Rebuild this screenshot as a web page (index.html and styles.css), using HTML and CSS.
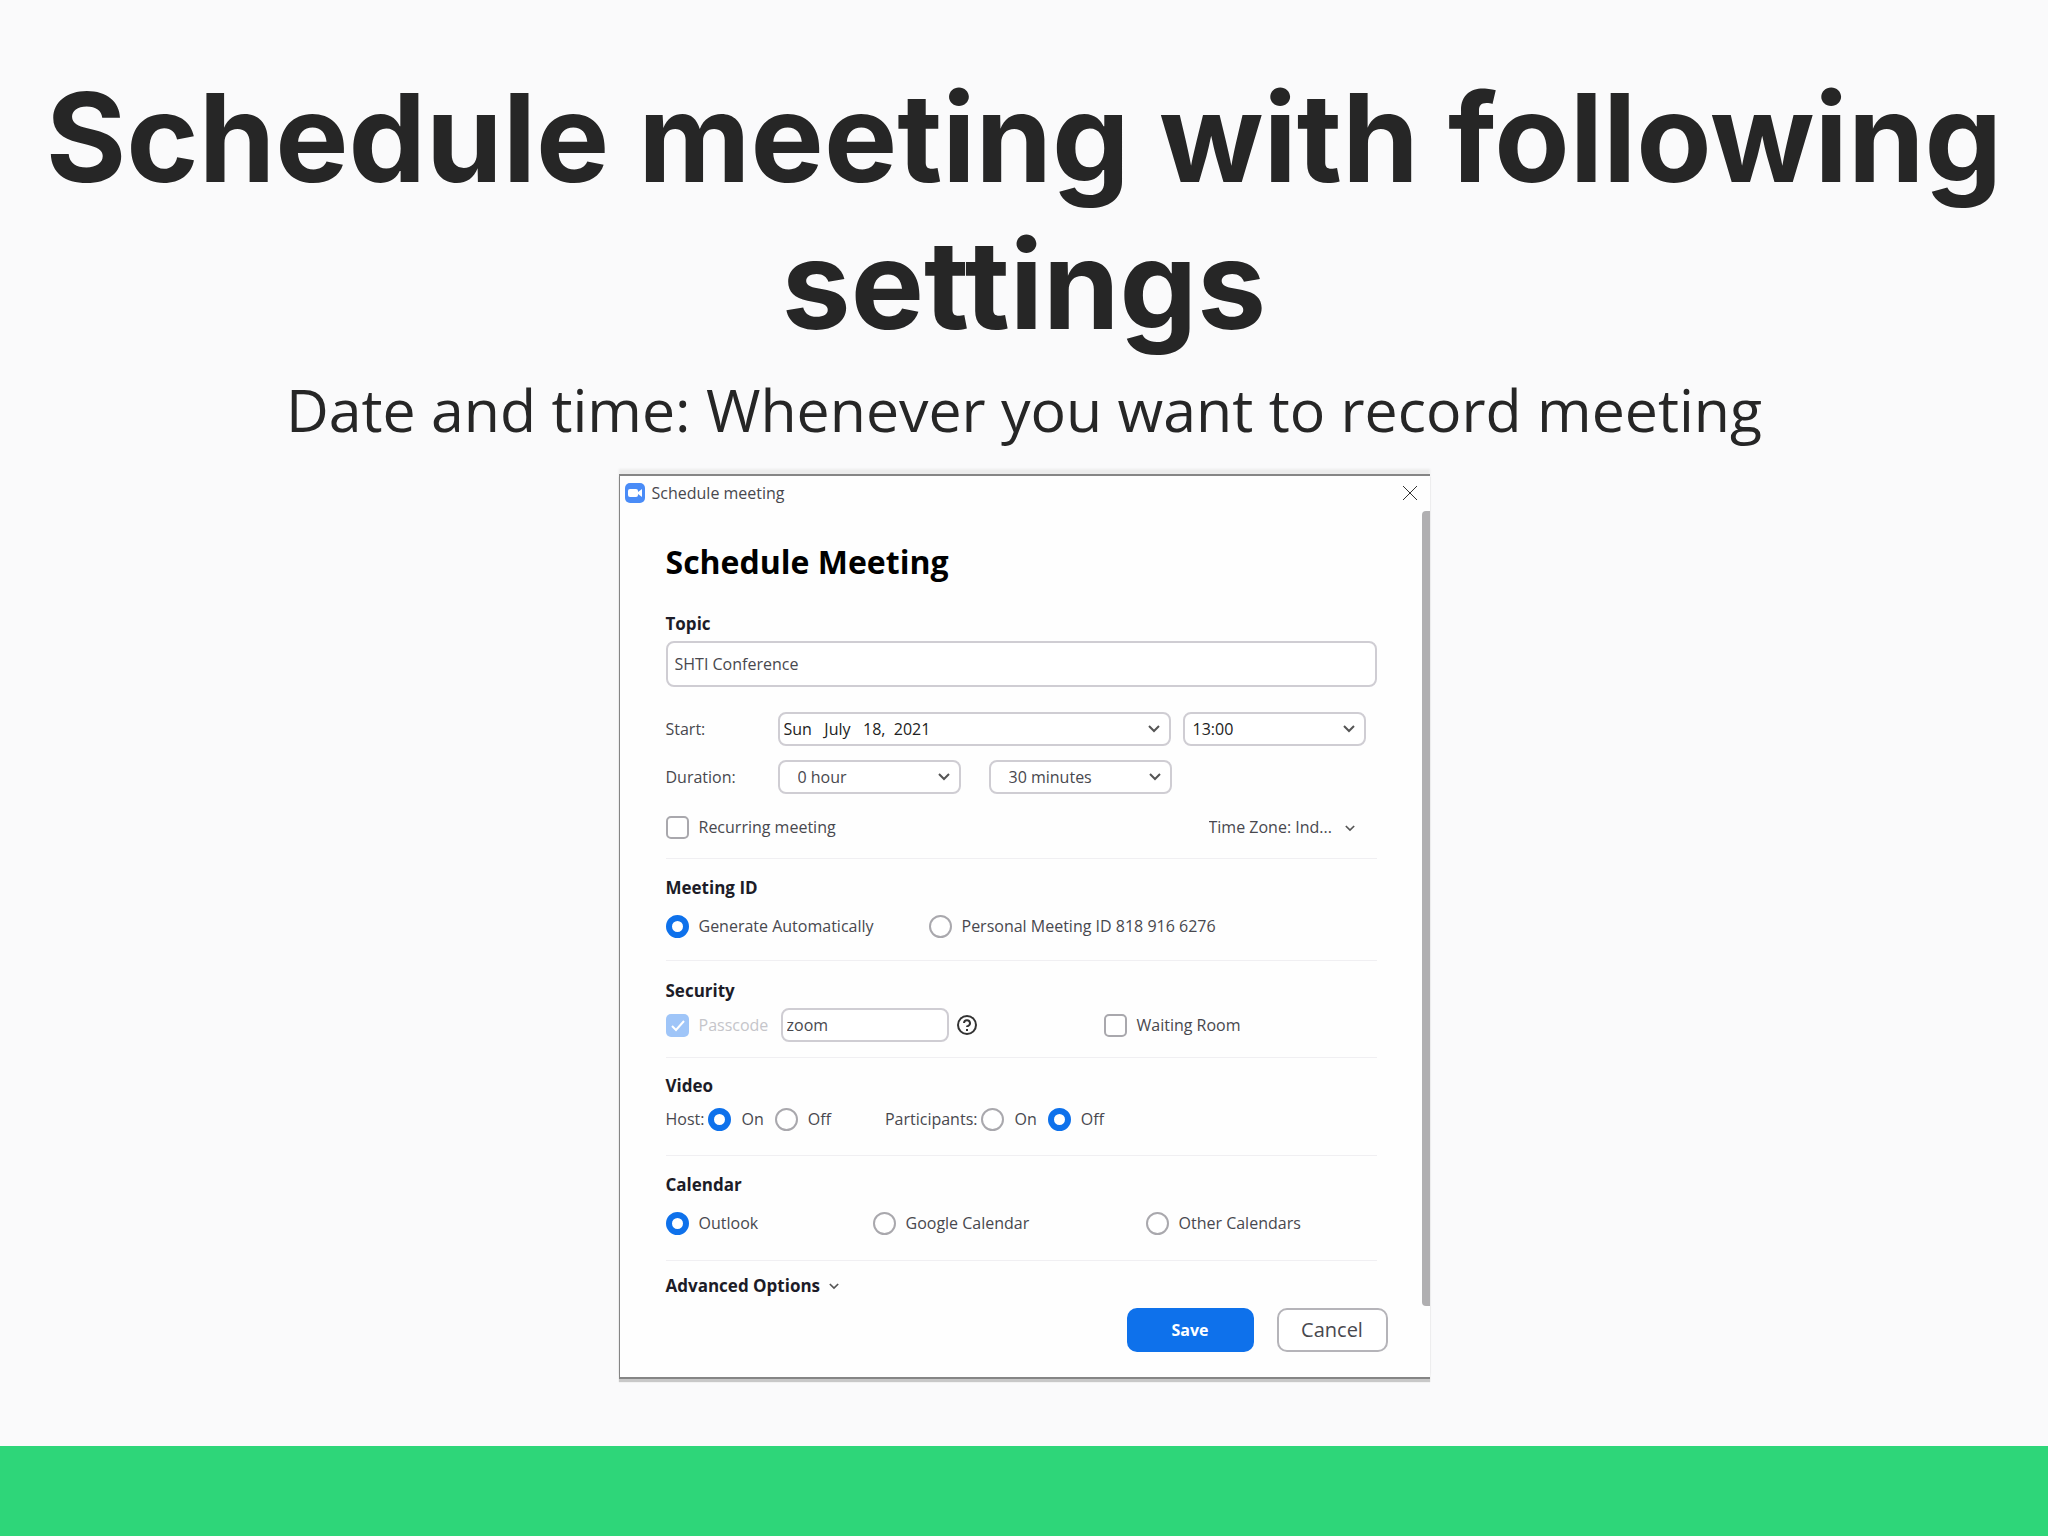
FILE: index.html
```html
<!DOCTYPE html>
<html lang="en">
<head>
    <meta charset="UTF-8">
    <meta name="viewport" content="width=device-width, initial-scale=1.0">
    <title>Schedule meeting with following settings</title>
    <link rel="stylesheet" href="styles.css">
</head>
<body>
    <header class="slide-header">
        <h1>Schedule meeting with following settings</h1>
        <p>Date and time: Whenever you want to record meeting</p>
    </header>

    <main class="dialog">
        <div class="title-bar">
            <svg class="app-icon" viewBox="0 0 20 20" aria-hidden="true">
                <rect width="20" height="20" rx="5" fill="#4a8cf7"/>
                <rect x="3" y="6" width="10" height="8" rx="2" fill="#fff"/>
                <path d="M13 9l4-3v8l-4-3z" fill="#fff"/>
            </svg>
            <span class="window-title">Schedule meeting</span>
            <button type="button" class="close" aria-label="Close">
                <svg viewBox="0 0 16 16"><path d="M1 1l14 14M15 1L1 15"/></svg>
            </button>
        </div>

        <form id="meeting-form">
            <div class="fields">
                <h2>Schedule Meeting</h2>

                <label class="heading" for="topic">Topic</label>
                <input type="text" id="topic" class="topic" name="topic" value="SHTI Conference">

                <div class="row start-row">
                    <label class="row-label" for="date">Start:</label>
                    <span class="select date">
                        <select id="date" name="date"><option>Sun&nbsp;&nbsp; July&nbsp;&nbsp; 18,&nbsp; 2021</option></select>
                        <svg class="chevron" viewBox="0 0 12 8"><path d="M1 1l5 5 5-5"/></svg>
                    </span>
                    <span class="select time">
                        <select id="time" name="time" aria-label="Start time"><option>13:00</option></select>
                        <svg class="chevron" viewBox="0 0 12 8"><path d="M1 1l5 5 5-5"/></svg>
                    </span>
                </div>

                <div class="row duration-row">
                    <label class="row-label" for="hours">Duration:</label>
                    <span class="select duration">
                        <select id="hours" name="hours"><option>0 hour</option></select>
                        <svg class="chevron" viewBox="0 0 12 8"><path d="M1 1l5 5 5-5"/></svg>
                    </span>
                    <span class="select duration">
                        <select id="minutes" name="minutes" aria-label="Minutes"><option>30 minutes</option></select>
                        <svg class="chevron" viewBox="0 0 12 8"><path d="M1 1l5 5 5-5"/></svg>
                    </span>
                </div>

                <div class="row recurring-row">
                    <label class="choice"><input type="checkbox" name="recurring">Recurring meeting</label>
                    <span class="select zone">
                        <select name="zone" aria-label="Time zone"><option>Time Zone: Ind...</option></select>
                        <svg class="chevron small" viewBox="0 0 12 8"><path d="M1 1l5 5 5-5"/></svg>
                    </span>
                </div>

                <section class="meeting-id">
                    <h3 class="heading">Meeting ID</h3>
                    <div class="row">
                        <label class="choice"><input type="radio" name="meetingId" checked>Generate Automatically</label>
                        <label class="choice"><input type="radio" name="meetingId">Personal Meeting ID 818 916 6276</label>
                    </div>
                </section>

                <section class="security">
                    <h3 class="heading">Security</h3>
                    <div class="row">
                        <label class="choice disabled"><input type="checkbox" name="passcodeOn" checked disabled>Passcode</label>
                        <input type="text" class="passcode" name="passcode" value="zoom" aria-label="Passcode">
                        <button type="button" class="help" aria-label="Help">
                            <svg viewBox="0 0 22 22"><circle cx="11" cy="11" r="9"/><path d="M8 9a3 3 0 1 1 4 3q-1 0-1 1M11 15v2"/></svg>
                        </button>
                        <label class="choice"><input type="checkbox" name="waitingRoom">Waiting Room</label>
                    </div>
                </section>

                <section class="video">
                    <h3 class="heading">Video</h3>
                    <div class="row">
                        <div class="toggle" role="radiogroup" aria-label="Host">
                            <span>Host:</span>
                            <label class="choice"><input type="radio" name="host" checked>On</label>
                            <label class="choice"><input type="radio" name="host">Off</label>
                        </div>
                        <div class="toggle" role="radiogroup" aria-label="Participants">
                            <span>Participants:</span>
                            <label class="choice"><input type="radio" name="participants">On</label>
                            <label class="choice"><input type="radio" name="participants" checked>Off</label>
                        </div>
                    </div>
                </section>

                <section class="calendar">
                    <h3 class="heading">Calendar</h3>
                    <div class="row">
                        <label class="choice"><input type="radio" name="calendar" checked>Outlook</label>
                        <label class="choice"><input type="radio" name="calendar">Google Calendar</label>
                        <label class="choice"><input type="radio" name="calendar">Other Calendars</label>
                    </div>
                </section>

                <button type="button" class="heading advanced">
                    Advanced Options
                    <svg class="chevron-inline" viewBox="0 0 12 8"><path d="M1 1l5 5 5-5"/></svg>
                </button>
            </div>

            <div class="button-container">
                <button type="submit" class="submit">Save</button>
                <button type="button" class="cancel">Cancel</button>
            </div>
        </form>
        <div class="scrollbar"></div>
    </main>

    <footer class="slide-footer"></footer>
</body>
</html>
```

FILE: styles.css
```css
:root {
    --primary-color: #0e71eb;
    --accent-color: #2ed679;
    --text-color: #48484e;
    --heading-color: #1c1c28;
    --input-border: #cfcdd3;
    --divider: #f0eff2;
}
* {
    box-sizing: border-box;
}
body {
    margin: 0;
    min-height: 100vh;
    display: flex;
    flex-direction: column;
    align-items: center;
    background-color: #fafafb;
    color: #262626;
    font-family: 'Open Sans', sans-serif;
}

/* Slide heading */
.slide-header {
    padding: 64px 24px 0;
    text-align: center;
}
.slide-header h1 {
    margin: 0;
    font-family: 'Inter', sans-serif;
    font-size: 123px;
    font-weight: 700;
    line-height: 147px;
}
.slide-header p {
    margin: 11px 0 0;
    font-size: 59px;
    line-height: 80px;
}
.slide-footer {
    align-self: stretch;
    height: 90px;
    margin-top: auto;
    background-color: var(--accent-color);
}

/* Dialog window */
.dialog {
    position: relative;
    width: 811px;
    max-width: 100%;
    margin: 25px 0;
    border: 1px solid #858585;
    border-width: 2px 0 2px 1px;
    background-color: #fefefe;
    box-shadow: 0 3px 1px #c8c8c8, 0 -5px 2px #ececec;
    color: var(--text-color);
    font-size: 16px;
    line-height: 22px;
}
.title-bar {
    display: flex;
    align-items: center;
    gap: 7px;
    height: 34px;
    padding: 0 12px 0 5px;
}
.app-icon {
    width: 20px;
    height: 20px;
}
.window-title {
    flex: 1;
}
.close, .help {
    display: flex;
    padding: 0;
    border: none;
    background: none;
    cursor: pointer;
}
.close svg {
    width: 16px;
    height: 16px;
    stroke: #333;
}
.scrollbar {
    position: absolute;
    top: 35px;
    right: 0;
    bottom: 71px;
    width: 8px;
    border-radius: 4px 0 0 4px;
    background-color: #b0afb1;
}

/* Form */
.fields {
    padding: 30px 53px 0 46px;
}
h2 {
    margin: 0 0 29px;
    color: #000;
    font-size: 32px;
    line-height: 44px;
}
.heading {
    display: block;
    margin: 0;
    color: var(--heading-color);
    font-size: 17px;
    font-weight: 700;
    line-height: 22px;
}
input, select, button {
    font: inherit;
    color: inherit;
}
input[type="text"], select {
    border: 2px solid var(--input-border);
    border-radius: 8px;
    background-color: #fff;
}
.topic {
    display: block;
    width: 100%;
    height: 46px;
    margin-top: 6px;
    padding: 0 7px;
}
.row {
    display: flex;
    align-items: center;
}
.start-row {
    gap: 12px;
    margin-top: 25px;
}
.start-row .row-label {
    width: 100px;
}
.duration-row {
    gap: 28px;
    margin-top: 14px;
}
.duration-row .row-label {
    width: 84px;
}
.select {
    position: relative;
    display: flex;
}
.select select {
    width: 100%;
    height: 34px;
    padding: 0 8px;
    appearance: none;
}
.date {
    width: 393px;
    color: #222;
}
.date select {
    padding: 0 4px;
}
.time {
    width: 183px;
    color: #222;
}
.duration {
    width: 183px;
}
.duration select {
    padding-left: 18px;
}
.chevron {
    position: absolute;
    top: 13px;
    right: 11px;
    width: 12px;
    height: 8px;
    pointer-events: none;
}
.chevron, .chevron-inline {
    fill: none;
    stroke: #555;
    stroke-width: 2;
}
.recurring-row {
    justify-content: space-between;
    height: 24px;
    margin-top: 21px;
}
.zone {
    width: 146px;
    margin-right: 22px;
}
.zone select {
    padding: 0;
    border: none;
    background: none;
}
.chevron.small, .chevron-inline {
    width: 10px;
    height: 7px;
}
.chevron.small {
    top: 15px;
    right: 0;
}

/* Tick boxes and radios */
.choice {
    display: flex;
    align-items: center;
    gap: 10px;
}
.choice input {
    flex: none;
    width: 23px;
    height: 23px;
    margin: 0;
    border: 2px solid #a9a8ad;
    background-color: #fff;
    appearance: none;
}
.choice input[type="checkbox"] {
    border-radius: 5px;
}
.choice input[type="radio"] {
    border-radius: 50%;
}
.choice input[type="radio"]:checked {
    border: 6px solid var(--primary-color);
}
.choice.disabled {
    color: #c5c5ca;
}
.choice input[type="checkbox"]:checked {
    border: none;
    background: #9fc5f8 url("data:image/svg+xml,%3Csvg xmlns='http://www.w3.org/2000/svg' viewBox='0 0 23 23'%3E%3Cpath d='M6 12l4 4 8-9' fill='none' stroke='white' stroke-width='2'/%3E%3C/svg%3E");
}

/* Sections */
.recurring-row + section {
    margin-top: 19px;
}
section {
    border-top: 1px solid var(--divider);
}
section .row {
    min-height: 24px;
}
.meeting-id {
    padding: 18px 0 22px;
}
.meeting-id .row, .calendar .row {
    margin-top: 15px;
}
.meeting-id .choice:first-child {
    width: 263px;
}
.security {
    padding: 19px 0 15px;
}
.security .row {
    margin-top: 6px;
}
.security .choice:first-child {
    width: 115px;
}
.passcode {
    width: 168px;
    height: 34px;
    padding: 0 4px;
}
.help {
    margin: 0 126px 0 7px;
}
.help svg {
    width: 22px;
    height: 22px;
    fill: none;
    stroke: #333;
    stroke-width: 2;
}
.video {
    padding: 17px 0 24px;
}
.video .row {
    gap: 54px;
    margin-top: 10px;
}
.toggle {
    display: flex;
    align-items: center;
    gap: 4px;
}
.toggle .choice + .choice {
    margin-left: 7px;
}
.calendar {
    padding: 18px 0 25px;
    border-bottom: 1px solid var(--divider);
}
.calendar .row {
    display: grid;
    grid-template-columns: 207px 273px auto;
}
.advanced {
    display: flex;
    align-items: center;
    gap: 9px;
    margin-top: 14px;
    padding: 0;
    border: none;
    background: none;
}

/* Buttons */
.button-container {
    display: flex;
    justify-content: flex-end;
    gap: 23px;
    padding: 11px 42px 25px 0;
}
.button-container button {
    height: 44px;
    border-radius: 10px;
    cursor: pointer;
}
button.submit {
    width: 127px;
    border: none;
    background-color: var(--primary-color);
    color: #fff;
    font-weight: 700;
}
button.cancel {
    width: 111px;
    border: 2px solid #b5b4b9;
    background-color: #fff;
    font-size: 20px;
}
```
